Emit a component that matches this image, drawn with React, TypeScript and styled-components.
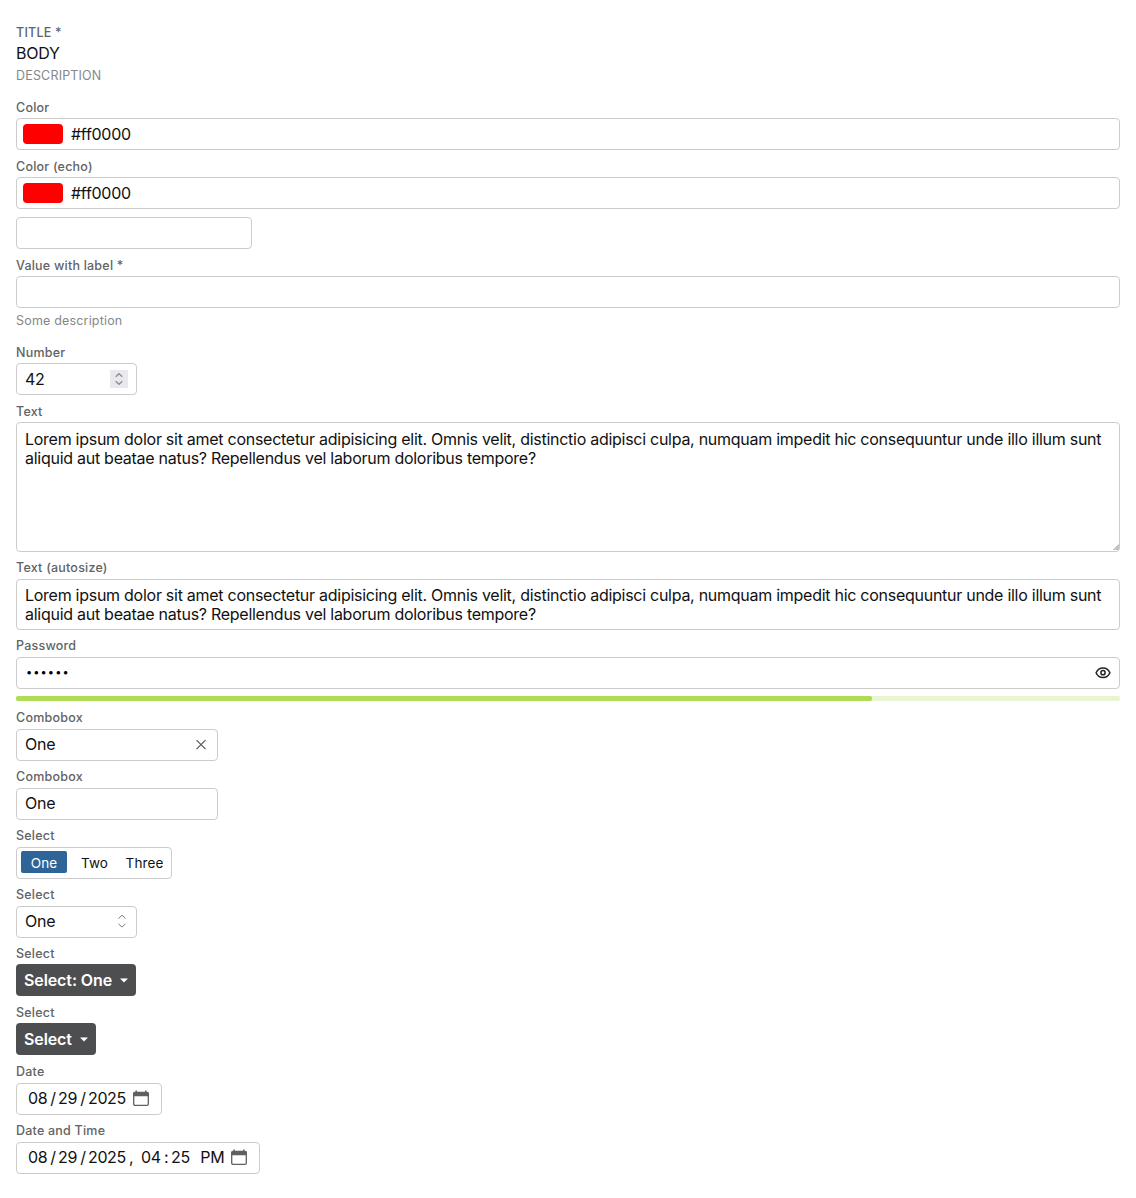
import React from "react";
import styled, { createGlobalStyle, css } from "styled-components";

const Global = createGlobalStyle`
  * { box-sizing: border-box; }
  body { margin: 0; background: #fff; color: #111; }
  body { font-family: Inter, "Liberation Sans", sans-serif; font-size: 16px; letter-spacing: -0.27px; }
`;

const Page = styled.main`
  padding: 24px 16px;
  display: flex;
  flex-direction: column;
  gap: 8px;
`;

const Field = styled.div<{ $end?: number }>`
  display: flex;
  flex-direction: column;
  align-items: flex-start;
  padding-bottom: ${(p) => p.$end ?? 0}px;
`;

const Label = styled.label<{ $high?: boolean; $h?: number }>`
  height: ${(p) => p.$h ?? 19}px;
  line-height: ${(p) => (p.$high ? 16 : 18)}px;
  font-size: 12.5px;
  font-weight: 500;
  letter-spacing: 0.22px;
  color: #626365;
  white-space: pre;
`;

const Description = styled.div<{ $h: number; $line: number }>`
  height: ${(p) => p.$h}px;
  line-height: ${(p) => p.$line}px;
  font-size: 12.5px;
  letter-spacing: 0.18px;
  color: #868789;
`;

const BodyText = styled.div`
  height: 22px;
  line-height: 21px;
`;

const Box = styled.div<{ $w?: number; $x?: number; $lift?: boolean }>`
  display: flex;
  align-items: center;
  width: ${(p) => (p.$w ? `${p.$w}px` : "100%")};
  height: 32px;
  padding: 0 ${(p) => p.$x ?? 8}px ${(p) => (p.$lift ? 2 : 0)}px;
  border: 1px solid #ccc;
  border-radius: 4px;
  background: #fff;
  white-space: pre;
`;

const Area = styled.div<{ $h: number; $top: number }>`
  position: relative;
  width: 100%;
  height: ${(p) => p.$h}px;
  padding: ${(p) => p.$top}px 8px 0;
  border: 1px solid #ccc;
  border-radius: 4px;
  line-height: 19px;
  white-space: pre;
`;

const Grip = styled.svg`
  position: absolute;
  right: 0;
  bottom: 1px;
`;

const Swatch = styled.span`
  width: 40px;
  height: 20px;
  margin-right: 8px;
  border-radius: 4px;
  background: #f00;
`;

const Spacer = styled.span`
  flex: 1;
`;

const Icon = styled.svg`
  margin-top: 1px;
`;

const Spin = styled.span`
  display: flex;
  width: 18px;
  height: 18px;
  background: #e9e9ed;
`;

const Dots = styled.span`
  padding-left: 1px;
  font-size: 11px;
  letter-spacing: 1.1px;
  color: #000;
`;

const Meter = styled.div`
  display: flex;
  height: 5px;
  margin: -1px 0 1px;
  border-radius: 2px;
  background: #e9f5d2;
`;

const MeterFill = styled.div`
  width: 856px;
  border-radius: 2px;
  background: #aedc53;
`;

const Option = styled.span<{ $on?: boolean; $w: number }>`
  width: ${(p) => p.$w}px;
  height: 22px;
  margin-top: -2px;
  line-height: 24px;
  border-radius: 2px;
  text-align: center;
  font-size: 13.5px;
  letter-spacing: 0.1px;
  ${(p) =>
    p.$on &&
    css`
      background: #2f6499;
      color: #fff;
    `}
`;

const MenuButton = styled.button<{ $w: number }>`
  display: flex;
  align-items: center;
  justify-content: space-between;
  width: ${(p) => p.$w}px;
  height: 32px;
  padding: 0 8px;
  border: 0;
  border-radius: 4px;
  background: #4d4e50;
  color: #fff;
  font: inherit;
  font-weight: 600;
  letter-spacing: -0.1px;
`;

const Part = styled.span<{ $w: number }>`
  width: ${(p) => p.$w}px;
  letter-spacing: -0.35px;
`;

const LOREM =
  "Lorem ipsum dolor sit amet consectetur adipisicing elit. Omnis velit, distinctio adipisci culpa, numquam impedit hic consequuntur unde illo illum sunt\naliquid aut beatae natus? Repellendus vel laborum doloribus tempore?";

const Caret = () => (
  <svg width="8" height="5" viewBox="0 0 8 5">
    <path
      d="M0.6 0.8h6.800L4 4.2z"
      fill="#fff"
      stroke="#fff"
      strokeWidth="0.600"
      strokeLinejoin="round"
    />
  </svg>
);

const Eye = () => (
  <Icon width="16" height="16" viewBox="0 0 16 16" fill="none" stroke="#222" strokeWidth="1.5">
    <path d="M1.1 7.700C2.500 4.400 5 2.900 8 2.900S13.500 4.400 14.900 7.700C13.500 11 11 12.500 8 12.500S2.500 11 1.100 7.700z" />
    <circle cx="8" cy="7.700" r="2.1" />
  </Icon>
);

const Calendar = () => (
  <svg width="16" height="17" viewBox="0 0 16 17">
    <rect x="0.7" y="2.500" width="14.600" height="12.800" rx="1.300" fill="none" stroke="#606060" strokeWidth="1.300" />
    <path d="M0 3.700Q0 2 1.800 2h12.400q1.800 0 1.800 1.700V6.300H0z" fill="#606060" />
    <path d="M3.200 0.400v3M12.800 0.400v3" stroke="#606060" strokeWidth="1.500" />
  </svg>
);

const DateParts = () => (
  <>
    <Part $w={22.2}>08</Part>
    <Part $w={7.8}>/</Part>
    <Part $w={22.2}>29</Part>
    <Part $w={7.8}>/</Part>
  </>
);

export default function App() {
  return (
    <>
      <Global />
      <Page>
        <Field>
          <Label>TITLE *</Label>
          <BodyText>BODY</BodyText>
          <Description $h={26} $line={21}>DESCRIPTION</Description>
        </Field>
        <Field>
          <Label>Color</Label>
          <Box $x={6}><Swatch />#ff0000</Box>
        </Field>
        <Field>
          <Label>Color (echo)</Label>
          <Box $x={6}><Swatch />#ff0000</Box>
        </Field>
        <Box $w={236} />
        <Field>
          <Label>Value with label *</Label>
          <Box />
          <Description $h={28} $line={25}>Some description</Description>
        </Field>
        <Field>
          <Label>Number</Label>
          <Box $w={121}>
            42
            <Spacer />
            <Spin>
              <svg width="18" height="18" fill="none" stroke="#8f8f9d" strokeWidth="1.500">
                <path d="M5.700 6.800L9 3.800l3.300 3M5.700 11.200l3.300 3 3.300-3" />
              </svg>
            </Spin>
          </Box>
        </Field>
        <Field>
          <Label>Text</Label>
          <Area $h={130} $top={7}>
            {LOREM}
            <Grip width="6" height="6">
              <path d="M6 0v6H0z" fill="#cfcfcf" />
              <path d="M0.500 6L6 0.500M3.500 6L6 3.500" stroke="#999" strokeWidth="0.700" />
            </Grip>
          </Area>
        </Field>
        <Field>
          <Label $high>Text (autosize)</Label>
          <Area $h={51} $top={6}>{LOREM}</Area>
        </Field>
        <Field>
          <Label $high>Password</Label>
          <Box $lift><Dots>••••••</Dots><Spacer /><Eye /></Box>
        </Field>
        <Meter><MeterFill /></Meter>
        <Field>
          <Label $high>Combobox</Label>
          <Box $w={202} $lift>
            One
            <Spacer />
            <Icon width="16" height="16" stroke="#58595b" strokeWidth="1.200">
              <path d="M3.500 3.200l9 9M12.500 3.200l-9 9" />
            </Icon>
          </Box>
        </Field>
        <Field>
          <Label $high>Combobox</Label>
          <Box $w={202} $lift>One</Box>
        </Field>
        <Field>
          <Label $high>Select</Label>
          <Box $w={156} $x={4}>
            <Option $on $w={46}>One</Option>
            <Option $w={55}>Two</Option>
            <Option $w={45}>Three</Option>
          </Box>
        </Field>
        <Field>
          <Label $high>Select</Label>
          <Box $w={121} $lift>
            One
            <Spacer />
            <Icon width="12" height="16" fill="none" stroke="#58595b" strokeWidth="0.800">
              <path d="M2.500 4.500L6 1.200 9.500 4.500M2.500 9.800L6 13.100 9.500 9.800" />
            </Icon>
          </Box>
        </Field>
        <Field $end={1}>
          <Label $high $h={18}>Select</Label>
          <MenuButton $w={120}>Select: One<Caret /></MenuButton>
        </Field>
        <Field $end={1}>
          <Label $high $h={18}>Select</Label>
          <MenuButton $w={80}>Select<Caret /></MenuButton>
        </Field>
        <Field>
          <Label $high>Date</Label>
          <Box $w={146} $x={11} $lift>
            <DateParts />
            <Part $w={45}>2025</Part>
            <Calendar />
          </Box>
        </Field>
        <Field>
          <Label $high>Date and Time</Label>
          <Box $w={244} $x={11} $lift>
            <DateParts />
            <Part $w={41}>2025</Part>
            <Part $w={12}>,</Part>
            <Part $w={23}>04</Part>
            <Part $w={7}>:</Part>
            <Part $w={29.4}>25</Part>
            <Part $w={30.6}>PM</Part>
            <Calendar />
          </Box>
        </Field>
      </Page>
    </>
  );
}
